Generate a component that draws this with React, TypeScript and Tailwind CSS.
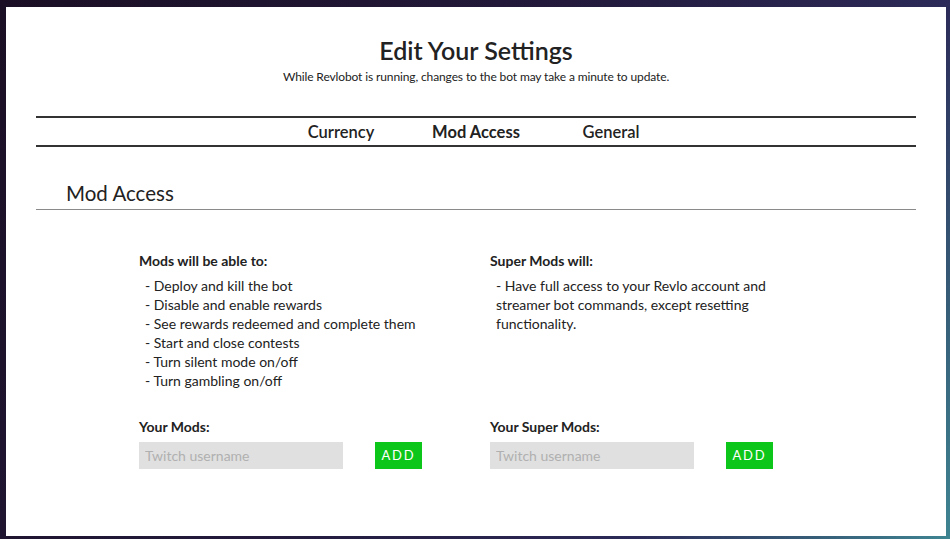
const modAbilities = [
  'Deploy and kill the bot',
  'Disable and enable rewards',
  'See rewards redeemed and complete them',
  'Start and close contests',
  'Turn silent mode on/off',
  'Turn gambling on/off',
];

const tabs = [
  { label: 'Currency', active: false },
  { label: 'Mod Access', active: true },
  { label: 'General', active: false },
];

type AddRowProps = {
  title: string;
};

const AddRow = ({ title }: AddRowProps): React.JSX.Element => (
  <div className="mt-[27px] flex flex-col">
    <div className="text-[14px] font-bold leading-[19px]">{title}</div>
    <div className="mt-[6px] flex items-center gap-[32px]">
      <input
        type="text"
        placeholder="Twitch username"
        className="h-[27px] w-[204px] bg-[#e0e0e0] px-[6px] text-[14px] text-[#222] outline-none placeholder-[#b0b0b0]"
      />
      <button className="h-[27px] w-[47px] bg-[#0cc61a] text-[13px] tracking-[0.14em] text-white">
        ADD
      </button>
    </div>
  </div>
);

export default function App(): React.JSX.Element {
  return (
    <div className="min-h-screen w-full bg-[linear-gradient(120deg,#1a0f24_0%,#231a3c_45%,#2c2a58_75%,#3f8592_100%)] pb-[3px] pl-[6px] pr-[4px] pt-[7px] font-['Lato',sans-serif] text-[#222]">
      <div className="h-[529px] bg-white pt-[28px]">
        <div className="flex flex-col items-center">
          <h1 className="text-[25px] font-semibold leading-[30px]">
            Edit Your Settings
          </h1>
          <p className="mt-[4px] text-[12px] leading-[16px] tracking-[-0.01em]">
            While Revlobot is running, changes to the bot may take a minute to
            update.
          </p>
        </div>

        <div className="mx-[30px] mt-[31px]">
          <nav className="flex h-[31px] items-center justify-center border-y-2 border-[#333]">
            {tabs.map((tab) => (
              <div
                key={tab.label}
                className={`w-[135px] pt-[1px] text-center text-[16.5px] leading-[27px] ${
                  tab.active ? 'font-bold' : 'font-semibold'
                }`}
              >
                {tab.label}
              </div>
            ))}
          </nav>

          <div className="mt-[32px] border-b border-[#8a8a8a] pb-[2px] pl-[30px]">
            <h2 className="text-[20.5px] leading-[28px]">Mod Access</h2>
          </div>

          <div className="mt-[41px] grid grid-cols-[283px_284px] gap-x-[68px] pl-[103px]">
            <div className="flex flex-col">
              <div className="text-[14px] font-bold leading-[19px]">
                Mods will be able to:
              </div>
              <ul className="mt-[6px] pl-[6px] text-[14px] leading-[19px]">
                {modAbilities.map((item) => (
                  <li key={item}>- {item}</li>
                ))}
              </ul>
            </div>

            <div className="flex flex-col">
              <div className="text-[14px] font-bold leading-[19px]">
                Super Mods will:
              </div>
              <p className="mt-[6px] pl-[6px] text-[14px] leading-[19px]">
                - Have full access to your Revlo account and streamer bot
                commands, except resetting functionality.
              </p>
            </div>

            <AddRow title="Your Mods:" />
            <AddRow title="Your Super Mods:" />
          </div>
        </div>
      </div>
    </div>
  );
}
